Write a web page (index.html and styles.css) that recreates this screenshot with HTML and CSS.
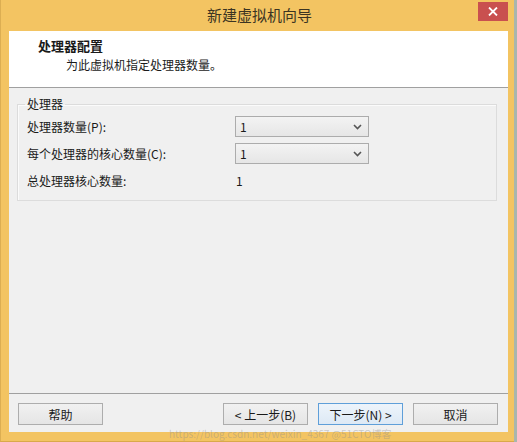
FILE: index.html
```html
<!DOCTYPE html>
<html lang="zh-CN">
<head>
  <meta charset="UTF-8">
  <title>新建虚拟机向导</title>
  <link rel="stylesheet" href="styles.css">
</head>
<body>

  <div class="window">
    <div class="titlebar">
      <span class="title">新建虚拟机向导</span>
      <div class="close-btn">
        <svg width="10" height="9" viewBox="0 0 10 9">
          <path d="M1 0.5 L9 8.5 M9 0.5 L1 8.5" stroke="#fff" stroke-width="1.8"/>
        </svg>
      </div>
    </div>

    <div class="client">
      <div class="header">
        <div class="header-title">处理器配置</div>
        <div class="header-sub">为此虚拟机指定处理器数量。</div>
      </div>

      <div class="content">
        <fieldset class="group">
          <legend>处理器</legend>
          <div class="form-grid">
            <label>处理器数量(P):</label>
            <div class="combo">
              <span>1</span>
              <svg width="9" height="6" viewBox="0 0 9 6"><path d="M1 1 L4.5 4.5 L8 1" fill="none" stroke="#555" stroke-width="1.6"/></svg>
            </div>

            <label>每个处理器的核心数量(C):</label>
            <div class="combo">
              <span>1</span>
              <svg width="9" height="6" viewBox="0 0 9 6"><path d="M1 1 L4.5 4.5 L8 1" fill="none" stroke="#555" stroke-width="1.6"/></svg>
            </div>

            <label>总处理器核心数量:</label>
            <div class="value">1</div>
          </div>
        </fieldset>
      </div>

      <div class="footer">
        <button class="btn">帮助</button>
        <div class="nav-buttons">
          <button class="btn">&lt; 上一步(B)</button>
          <button class="btn btn-default">下一步(N) &gt;</button>
          <button class="btn">取消</button>
        </div>
      </div>
    </div>
    <div class="watermark">https://blog.csdn.net/weixin_4367 @51CTO博客</div>
  </div>

</body>
</html>
```

FILE: styles.css
```css
body {
  margin: 0;
  background-color: #a9b6ad;
  font-family: "Microsoft YaHei", "Noto Sans CJK SC", sans-serif;
  font-size: 12px;
  color: #1a1a1a;
}

.window {
  width: 514px;
  height: 442px;
  box-sizing: border-box;
  background-color: #f3c462;
  border-left: 1px solid #dcae52;
  border-bottom: 1px solid #d9a94a;
  padding: 0 6px 9px 8px;
  display: flex;
  flex-direction: column;
  position: relative;
}

.titlebar {
  height: 31px;
  position: relative;
  display: flex;
  align-items: center;
  justify-content: center;
  padding-left: 2px;
}

.title {
  font-size: 15px;
  color: #3b3422;
  margin-top: -2px;
}

.close-btn {
  position: absolute;
  top: 2px;
  right: 0;
  width: 30px;
  height: 19px;
  background-color: #c9504f;
  display: flex;
  align-items: center;
  justify-content: center;
}

.client {
  flex: 1;
  background-color: #f0f0f0;
  display: flex;
  flex-direction: column;
}

.header {
  height: 57px;
  background-color: #fff;
  border-bottom: 1px solid #a0a0a0;
  box-sizing: border-box;
  padding: 6px 0 0 29px;
}

.header-title {
  font-weight: bold;
  font-size: 13px;
  line-height: 18px;
}

.header-sub {
  padding-left: 28px;
  line-height: 18px;
  margin-top: 1px;
}

.content {
  flex: 1;
  padding: 8px 11px 0 8px;
}

.group {
  margin: 0;
  border: 1px solid #dcdcdc;
  box-shadow: inset 1px 1px 0 #fbfbfb;
  padding: 4px 9px 9px 9px;
}

.group legend {
  padding: 0 2px;
  margin-left: -2px;
  line-height: 16px;
}

.form-grid {
  display: grid;
  grid-template-columns: 208px 134px;
  grid-auto-rows: 21px;
  row-gap: 6px;
  align-items: center;
}

.combo {
  height: 21px;
  box-sizing: border-box;
  border: 1px solid #acacac;
  background: linear-gradient(#f3f3f3, #e6e6e6);
  display: flex;
  align-items: center;
  justify-content: space-between;
  padding: 0 6px 0 4px;
}

.value {
  padding-left: 1px;
}

.footer {
  height: 39px;
  box-sizing: border-box;
  border-top: 1px solid #a0a0a0;
  display: flex;
  justify-content: space-between;
  padding: 9px 10px 0 9px;
}

.nav-buttons {
  display: flex;
  gap: 10px;
}

.btn {
  width: 85px;
  height: 22px;
  border: 1px solid #adadad;
  background: linear-gradient(#f1f1f1, #e5e5e5);
  font-family: inherit;
  font-size: 12px;
  color: #1a1a1a;
  padding: 0;
}

.btn-default {
  border-color: #5f9fd9;
  background: linear-gradient(#edf4fb, #dde9f5);
}

/* faint site stamp along the lower frame edge */
.watermark {
  position: absolute;
  left: 168px;
  bottom: 1px;
  font-size: 10px;
  line-height: 12px;
  color: rgba(140, 140, 140, 0.4);
  white-space: nowrap;
  pointer-events: none;
}
```
